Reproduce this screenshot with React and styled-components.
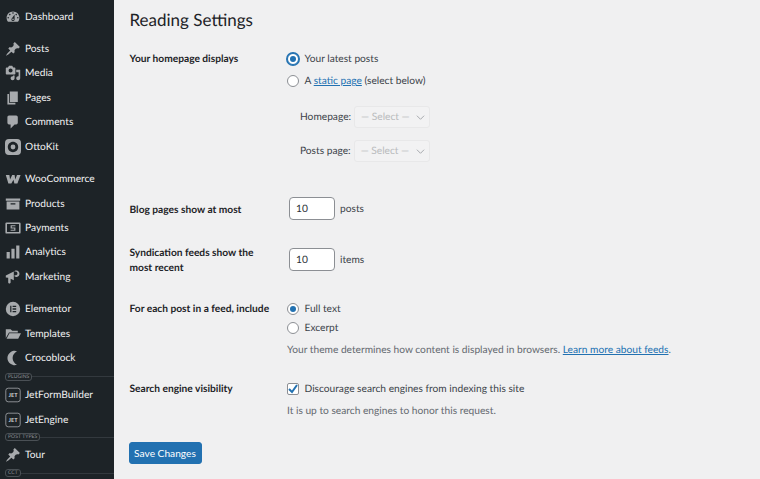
import React from "react";
import styled, { createGlobalStyle } from "styled-components";

const GlobalStyle = createGlobalStyle`
  html, body {
    margin: 0;
    height: 100%;
    overflow: hidden;
    background: #f0f0f1;
    font-family: Lato, "Noto Sans", sans-serif;
    font-size: 10.2px;
    text-rendering: geometricPrecision;
    color: #3c434a;
  }
`;

const Page = styled.div`
  display: flex;
  height: 479px;
  overflow: hidden;
`;

const Sidebar = styled.nav`
  flex: 0 0 114px;
  background: #1d2327;
  display: flex;
  flex-direction: column;
  padding-top: 4.3px;
  overflow: hidden;
`;

const MenuItem = styled.div`
  display: flex;
  align-items: center;
  flex: 0 0 24.45px;
  height: 24.45px;
  padding-left: 5px;
  gap: 4px;
  margin-top: ${(p) => (p.$sep ? "8px" : "0")};
  color: #f0f0f1;
  svg {
    flex: 0 0 16px;
    width: 16px;
    height: 16px;
    fill: #a7aaad;
  }
`;

const Divider = styled.div`
  display: flex;
  align-items: center;
  height: ${(p) => p.$h}px;
  flex: 0 0 ${(p) => p.$h}px;
  padding-left: 5px;
  &::after {
    content: "";
    flex: 1;
    height: 1px;
    background: #33393e;
  }
`;

const DividerTag = styled.span`
  border: 1px solid #4a5055;
  border-radius: 3px;
  color: #8c8f94;
  font-size: 5px;
  line-height: 6px;
  padding: 0 2px;
  letter-spacing: 0.1px;
`;

const Content = styled.main`
  flex: 1;
  padding: 0 0 0 15.5px;
`;

const Title = styled.h1`
  margin: 0;
  padding-top: 8px;
  font-size: 17px;
  line-height: 23px;
  font-weight: 400;
  color: #1d2327;
`;

const Row = styled.section`
  display: grid;
  grid-template-columns: 157.5px 1fr;
  margin-top: ${(p) => p.$top || 0}px;
`;

const Label = styled.div`
  font-weight: 700;
  color: #1d2327;
  line-height: 14.5px;
  width: 145px;
  margin-top: ${(p) => p.$shift || 0}px;
`;

const Field = styled.div`
  display: flex;
  flex-direction: column;
  min-width: 0;
`;

const Line = styled.div`
  display: flex;
  align-items: center;
  gap: 5px;
  height: ${(p) => p.$h || 14}px;
  margin-top: ${(p) => p.$top || 0}px;
  white-space: nowrap;
`;

const Radio = styled.span`
  box-sizing: border-box;
  width: 12px;
  height: 12px;
  border-radius: 50%;
  background: #fff;
  border: 1px solid #8c8f94;
  margin-right: 0.5px;
  position: relative;
  flex: none;
  ${(p) =>
    p.$on &&
    `&::after {
      content: "";
      position: absolute;
      inset: 2px;
      border-radius: 50%;
      background: #2271b1;
    }`}
  ${(p) => p.$focus && "border-color: #2271b1; box-shadow: 0 0 0 1px #2271b1;"}
`;

const Checkbox = styled.span`
  box-sizing: border-box;
  width: 12px;
  height: 12px;
  background: #fff;
  border: 1px solid #8c8f94;
  border-radius: 2px;
  margin-right: 0.5px;
  display: flex;
  flex: none;
  svg {
    width: 14px;
    height: 14px;
    margin: -2px;
    flex: none;
  }
`;

const Link = styled.a`
  color: #2271b1;
  text-decoration: underline;
`;

const PageSelectRow = styled.div`
  display: flex;
  align-items: center;
  gap: 3px;
  padding-left: 13px;
  height: 22px;
  margin-top: ${(p) => p.$top}px;
`;

const SelectBox = styled.div`
  box-sizing: border-box;
  width: 76px;
  height: 22px;
  border: 1px solid #e8e8e9;
  border-radius: 3px;
  background: #f2f2f3;
  color: #b9bbbd;
  display: flex;
  align-items: center;
  justify-content: space-between;
  padding: 0 4px 0 6px;
  white-space: nowrap;
  svg {
    width: 9px;
    height: 9px;
    stroke: #a7aaad;
    fill: none;
    stroke-width: 1.1;
  }
`;

const NumberInput = styled.div`
  box-sizing: border-box;
  width: 46px;
  height: 23px;
  margin-left: 2px;
  background: #fff;
  border: 1px solid #8c8f94;
  border-radius: 4px;
  color: #2c3338;
  display: flex;
  align-items: center;
  padding-left: 6px;
`;

const Description = styled.p`
  margin: ${(p) => p.$top}px 0 0;
  color: #646970;
  line-height: 14px;
  white-space: nowrap;
`;

const SaveButton = styled.button`
  display: block;
  margin: 24px 0 0 -1px;
  width: 73px;
  height: 22px;
  background: #2271b1;
  border: 1px solid #2271b1;
  border-radius: 3px;
  color: #fff;
  font: inherit;
  padding: 0;
`;

const Dash = () => (
  <svg viewBox="0 0 20 20"><path d="M3.76 16h12.48c1.1-1.37 1.76-3.11 1.76-5 0-4.42-3.58-8-8-8s-8 3.58-8 8c0 1.89.66 3.63 1.76 5zM10 4c.55 0 1 .45 1 1s-.45 1-1 1-1-.45-1-1 .45-1 1-1zM6 6c.55 0 1 .45 1 1s-.45 1-1 1-1-.45-1-1 .45-1 1-1zm8 0c.55 0 1 .45 1 1s-.45 1-1 1-1-.45-1-1 .45-1 1-1zm-5.37 5.55L12 7v6c0 1.1-.9 2-2 2s-2-.9-2-2c0-.57.24-1.08.63-1.45zM4 10c.55 0 1 .45 1 1s-.45 1-1 1-1-.45-1-1 .45-1 1-1zm12 0c.55 0 1 .45 1 1s-.45 1-1 1-1-.45-1-1 .45-1 1-1zm-5 3c0-.55-.45-1-1-1s-1 .45-1 1 .45 1 1 1 1-.45 1-1z" fillRule="evenodd" /></svg>
);
const Pin = () => (
  <svg viewBox="0 0 20 20"><path d="M10.44 3.02l1.82-1.82 6.36 6.35-1.83 1.82c-1.05-.68-2.48-.57-3.41.36l-.75.75c-.92.93-1.04 2.35-.35 3.41l-1.83 1.82-2.41-2.41-2.8 2.79c-.42.42-3.38 2.71-3.8 2.29s1.86-3.39 2.28-3.81l2.79-2.79L4.1 9.36l1.83-1.82c1.05.69 2.48.57 3.4-.36l.75-.75c.93-.92 1.05-2.35.36-3.41z" /></svg>
);
const Media = () => (
  <svg viewBox="0 0 20 20"><path d="M13 11V4c0-.55-.45-1-1-1h-1.67L9 1H5L3.67 3H2c-.55 0-1 .45-1 1v7c0 .55.45 1 1 1h10c.55 0 1-.45 1-1zM7 4.5c1.38 0 2.5 1.12 2.5 2.5S8.38 9.5 7 9.5 4.5 8.38 4.5 7 5.62 4.5 7 4.5zM14 6h5v10.5c0 1.38-1.12 2.5-2.5 2.5S14 17.88 14 16.5s1.12-2.5 2.5-2.5c.17 0 .34.02.5.05V9h-3V6zm-4 8.05V13h2v3.5c0 1.38-1.12 2.5-2.5 2.5S7 17.88 7 16.5 8.12 14 9.5 14c.17 0 .34.02.5.05z" fillRule="evenodd" /></svg>
);
const Pages = () => (
  <svg viewBox="0 0 20 20"><path d="M6 15V2h10v13H6zm-1 1h8v2H3V5h2v11z" /></svg>
);
const Comments = () => (
  <svg viewBox="0 0 20 20"><path d="M5 2h9c1.1 0 2 .9 2 2v7c0 1.1-.9 2-2 2h-2l-5 5v-5H5c-1.1 0-2-.9-2-2V4c0-1.1.9-2 2-2z" /></svg>
);
const Otto = () => (
  <svg viewBox="0 0 20 20"><path fillRule="evenodd" d="M5 0h10a5 5 0 0 1 5 5v10a5 5 0 0 1-5 5H5a5 5 0 0 1-5-5V5a5 5 0 0 1 5-5zm5 3.5c-3.6 0-6.5 2.9-6.5 6.5s2.9 6.5 6.5 6.5 6.5-2.9 6.5-6.5-2.9-6.5-6.5-6.5zm0 3.5a3 3 0 1 1 0 6 3 3 0 0 1 0-6z" /></svg>
);
const Woo = () => (
  <svg viewBox="0 0 20 20"><path d="M1 5h4.5l.8 5.5L9 5h3l.8 5.5L15 5h4.5l-4 10.5h-3.8L10.6 11l-2.7 4.5H4.2z" /></svg>
);
const Products = () => (
  <svg viewBox="0 0 20 20"><path fillRule="evenodd" d="M1 3h18v3H1zM2 7h16v10H2zm5 2v1.5h6V9z" /></svg>
);
const Payments = () => (
  <svg viewBox="0 0 20 20">
    <path fillRule="evenodd" d="M2 3h16a1.5 1.5 0 0 1 1.5 1.5v11A1.5 1.5 0 0 1 18 17H2a1.5 1.5 0 0 1-1.5-1.5v-11A1.5 1.5 0 0 1 2 3zm.5 2v10h15V5z" />
    <path d="M7 6.5h6v1.3H8.5v1.5H13v4.2H7v-1.3h4.5v-1.6H7z" />
  </svg>
);
const Analytics = () => (
  <svg viewBox="0 0 20 20"><path d="M2 10h4v8H2zM8 6h4v12H8zM14 2h4v16h-4z" /></svg>
);
const Marketing = () => (
  <svg viewBox="0 0 20 20">
    <path d="M1 8l10-5v11L7 12.2V17a1 1 0 0 1-1 1H5a1 1 0 0 1-1-1v-6l-3-.5z" />
    <path fillRule="evenodd" d="M14 2a4 4 0 1 1-2 7.4V7.6A2.4 2.4 0 1 0 12 3.4V2.6c.6-.4 1.3-.6 2-.6z" />
  </svg>
);
const Elementor = () => (
  <svg viewBox="0 0 20 20"><path fillRule="evenodd" d="M10 1a9 9 0 1 1 0 18 9 9 0 0 1 0-18zM6.5 6v8H8V6zm3 0v1.6H14V6zm0 3.2v1.6H14V9.2zm0 3.2V14H14v-1.6z" /></svg>
);
const Templates = () => (
  <svg viewBox="0 0 20 20"><path d="M1 4h6l2 2h7v2H5L1 15zM5.5 9H20l-3.5 7H2z" /></svg>
);
const Croco = () => (
  <svg viewBox="0 0 20 20"><path d="M15 1.5a9 9 0 1 0 0 17c-3-1.5-5.5-4.6-5.5-8.5s2.5-7 5.5-8.5z" /></svg>
);

const JetBox = styled.svg`
  && {
    fill: none;
  }
  rect {
    stroke: #a7aaad;
    stroke-width: 1;
    fill: none;
  }
  text {
    fill: #d5d6d8;
    stroke: none;
    font-size: 7px;
    font-weight: 700;
    font-family: Lato, sans-serif;
  }
`;

const Jet = () => (
  <JetBox viewBox="0 0 20 20">
    <rect x="1" y="1.5" width="18" height="17" rx="3" />
    <text x="10" y="12.5" textAnchor="middle">JET</text>
  </JetBox>
);

const menu = [
  { type: "item", Icon: Dash, text: "Dashboard" },
  { type: "item", Icon: Pin, text: "Posts", sep: true },
  { type: "item", Icon: Media, text: "Media" },
  { type: "item", Icon: Pages, text: "Pages" },
  { type: "item", Icon: Comments, text: "Comments" },
  { type: "item", Icon: Otto, text: "OttoKit" },
  { type: "item", Icon: Woo, text: "WooCommerce", sep: true },
  { type: "item", Icon: Products, text: "Products" },
  { type: "item", Icon: Payments, text: "Payments" },
  { type: "item", Icon: Analytics, text: "Analytics" },
  { type: "item", Icon: Marketing, text: "Marketing" },
  { type: "item", Icon: Elementor, text: "Elementor", sep: true },
  { type: "item", Icon: Templates, text: "Templates" },
  { type: "item", Icon: Croco, text: "Crocoblock" },
  { type: "divider", text: "PLUGINS", h: 12.5 },
  { type: "item", Icon: Jet, text: "JetFormBuilder" },
  { type: "item", Icon: Jet, text: "JetEngine" },
  { type: "divider", text: "POST TYPES", h: 11 },
  { type: "item", Icon: Pin, text: "Tour" },
  { type: "divider", text: "CCT", h: 12 },
];

const Chevron = () => (
  <svg viewBox="0 0 10 10"><path d="M1 3l4 4 4-4" /></svg>
);

export default function App() {
  return (
    <Page>
      <GlobalStyle />
      <Sidebar>
        {menu.map(({ type, Icon, text, sep, h }) =>
          type === "divider" ? (
            <Divider key={text} $h={h}>
              <DividerTag>{text}</DividerTag>
            </Divider>
          ) : (
            <MenuItem key={text} $sep={sep}>
              <Icon />
              {text}
            </MenuItem>
          )
        )}
      </Sidebar>
      <Content>
        <Title>Reading Settings</Title>
        <Row $top={21}>
          <Label>Your homepage displays</Label>
          <Field>
            <Line>
              <Radio $on $focus />
              Your latest posts
            </Line>
            <Line $top={8}>
              <Radio />
              <span>
                A <Link>static page</Link> (select below)
              </span>
            </Line>
            <PageSelectRow $top={18}>
              Homepage:
              <SelectBox>
                — Select —
                <Chevron />
              </SelectBox>
            </PageSelectRow>
            <PageSelectRow $top={12}>
              Posts page:
              <SelectBox>
                — Select —
                <Chevron />
              </SelectBox>
            </PageSelectRow>
          </Field>
        </Row>
        <Row $top={35}>
          <Label $shift={6}>Blog pages show at most</Label>
          <Line $h={23}>
            <NumberInput>10</NumberInput>
            posts
          </Line>
        </Row>
        <Row $top={28}>
          <Label $shift={-2}>Syndication feeds show the most recent</Label>
          <Line $h={23}>
            <NumberInput>10</NumberInput>
            items
          </Line>
        </Row>
        <Row $top={27}>
          <Label>For each post in a feed, include</Label>
          <Field>
            <Line>
              <Radio $on />
              Full text
            </Line>
            <Line $top={5}>
              <Radio />
              Excerpt
            </Line>
            <Description $top={8}>
              Your theme determines how content is displayed in browsers.{" "}
              <Link>Learn more about feeds</Link>.
            </Description>
          </Field>
        </Row>
        <Row $top={25}>
          <Label>Search engine visibility</Label>
          <Field>
            <Line>
              <Checkbox>
                <svg viewBox="0 0 14 14">
                  <path d="M3 7l3 3 5-7" fill="none" stroke="#2271b1" strokeWidth="2" />
                </svg>
              </Checkbox>
              Discourage search engines from indexing this site
            </Line>
            <Description $top={8}>It is up to search engines to honor this request.</Description>
          </Field>
        </Row>
        <SaveButton>Save Changes</SaveButton>
      </Content>
    </Page>
  );
}
